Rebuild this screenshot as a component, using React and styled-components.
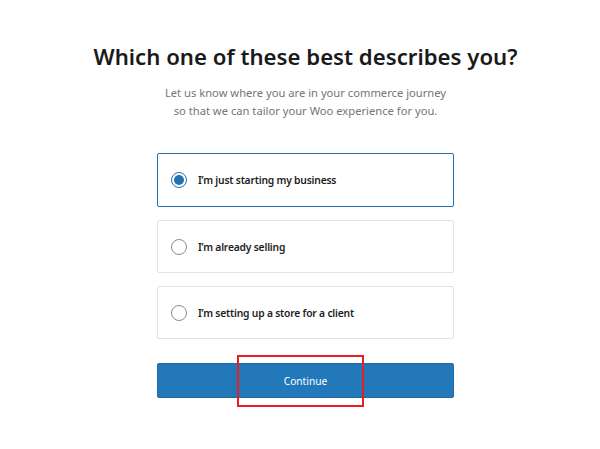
import React, { useState } from "react";
import styled, { createGlobalStyle } from "styled-components";

const Global = createGlobalStyle`
  html, body { margin: 0; padding: 0; background: #fff; }
  body { font-family: "Noto Sans", "Open Sans", sans-serif; color: #1e1e1e; }
  * { box-sizing: border-box; }
`;

const Page = styled.div`
  width: 600px;
  height: 449px;
  display: flex;
  flex-direction: column;
  align-items: center;
  padding: 39px 0 0 11px;
`;

const Title = styled.h1`
  margin: 0;
  font-size: 22.2px;
  font-weight: 600;
  line-height: 36px;
  color: #1a1a1a;
`;

const Subtitle = styled.p`
  margin: 9px 0 0;
  font-size: 11.2px;
  line-height: 18px;
  color: #757575;
  text-align: center;
`;

const Options = styled.div`
  margin-top: 33px;
  width: 297px;
  display: flex;
  flex-direction: column;
  gap: 13px;
`;

const Card = styled.label`
  height: ${(p) => (p.$selected ? "54px" : "53px")};
  display: flex;
  align-items: center;
  gap: 11px;
  padding-left: 13px;
  border: ${(p) => (p.$selected ? "1.5px solid #2271b1" : "1px solid #e2e2e2")};
  border-radius: 2px;
  background: #fff;
  cursor: pointer;
`;

const Radio = styled.span`
  width: 16px;
  height: 16px;
  border-radius: 50%;
  flex: none;
  border: ${(p) => (p.$checked ? "1.5px solid #2271b1" : "1.5px solid #8c8c8c")};
  display: flex;
  align-items: center;
  justify-content: center;
  &::after {
    content: "";
    width: 10px;
    height: 10px;
    border-radius: 50%;
    background: ${(p) => (p.$checked ? "#2271b1" : "transparent")};
  }
`;

const Label = styled.span`
  font-size: 10.3px;
  font-weight: 600;
  letter-spacing: -0.2px;
  color: #1e1e1e;
`;

const ButtonWrap = styled.div`
  position: relative;
  width: 297px;
  margin-top: 24px;
`;

const Button = styled.button`
  width: 100%;
  height: 35px;
  border: 1px solid #1c6aa6;
  border-radius: 2px;
  background: #2378b9;
  color: #fff;
  font-family: inherit;
  font-size: 10.2px;
  cursor: pointer;
`;

const Highlight = styled.div`
  position: absolute;
  left: 80px;
  top: -8px;
  width: 127px;
  height: 52px;
  border: 2px solid #ec1c24;
  pointer-events: none;
`;

const options = [
  "I’m just starting my business",
  "I’m already selling",
  "I’m setting up a store for a client",
];

export default function App() {
  const [sel, setSel] = useState(0);
  return (
    <>
      <Global />
      <Page>
        <Title>Which one of these best describes you?</Title>
        <Subtitle>
          Let us know where you are in your commerce journey
          <br />
          so that we can tailor your Woo experience for you.
        </Subtitle>
        <Options>
          {options.map((o, i) => (
            <Card key={o} $selected={sel === i} onClick={() => setSel(i)}>
              <Radio $checked={sel === i} />
              <Label>{o}</Label>
            </Card>
          ))}
        </Options>
        <ButtonWrap>
          <Button>Continue</Button>
          <Highlight />
        </ButtonWrap>
      </Page>
    </>
  );
}
